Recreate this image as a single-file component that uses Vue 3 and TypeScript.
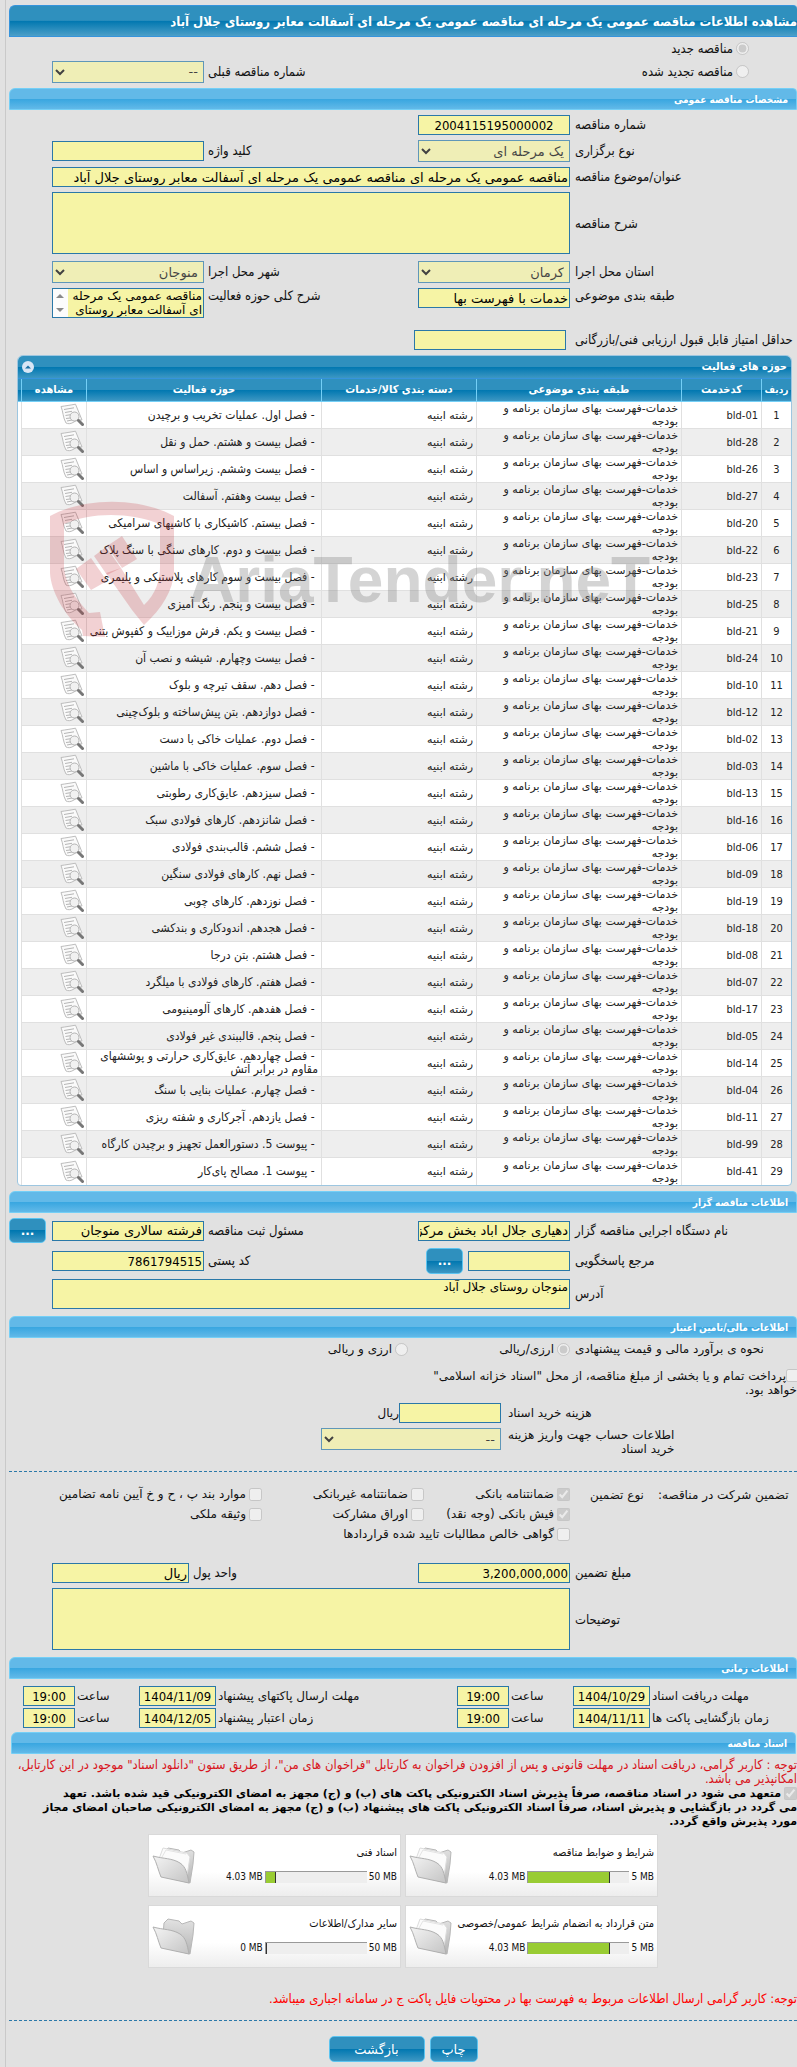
<script setup lang="ts">
interface Activity {
  code: string
  area: string
}

interface DocCard {
  title: string
  used: string
  limit: string
  percent: number
  filled: boolean
}

const activities: Activity[] = [
  { code: 'bld-01', area: 'فصل اول. عملیات تخریب و برچیدن' },
  { code: 'bld-28', area: 'فصل بیست و هشتم. حمل و نقل' },
  { code: 'bld-26', area: 'فصل بیست وششم. زیراساس و اساس' },
  { code: 'bld-27', area: 'فصل بیست وهفتم. آسفالت' },
  { code: 'bld-20', area: 'فصل بیستم. کاشیکاری با کاشیهای سرامیکی' },
  { code: 'bld-22', area: 'فصل بیست و دوم. کارهای سنگی با سنگ پلاک' },
  { code: 'bld-23', area: 'فصل بیست و سوم کارهای پلاستیکی و پلیمری' },
  { code: 'bld-25', area: 'فصل بیست و پنجم. رنگ آمیزی' },
  { code: 'bld-21', area: 'فصل بیست و یکم. فرش موزاییک و کفپوش بتنی' },
  { code: 'bld-24', area: 'فصل بیست وچهارم. شیشه و نصب آن' },
  { code: 'bld-10', area: 'فصل دهم. سقف تیرچه و بلوک' },
  { code: 'bld-12', area: 'فصل دوازدهم. بتن پیش‌ساخته و بلوک‌چینی' },
  { code: 'bld-02', area: 'فصل دوم. عملیات خاکی با دست' },
  { code: 'bld-03', area: 'فصل سوم. عملیات خاکی با ماشین' },
  { code: 'bld-13', area: 'فصل سیزدهم. عایق‌کاری رطوبتی' },
  { code: 'bld-16', area: 'فصل شانزدهم. کارهای فولادی سبک' },
  { code: 'bld-06', area: 'فصل ششم. قالب‌بندی فولادی' },
  { code: 'bld-09', area: 'فصل نهم. کارهای فولادی سنگین' },
  { code: 'bld-19', area: 'فصل نوزدهم. کارهای چوبی' },
  { code: 'bld-18', area: 'فصل هجدهم. اندودکاری و بندکشی' },
  { code: 'bld-08', area: 'فصل هشتم. بتن درجا' },
  { code: 'bld-07', area: 'فصل هفتم. کارهای فولادی با میلگرد' },
  { code: 'bld-17', area: 'فصل هفدهم. کارهای آلومینیومی' },
  { code: 'bld-05', area: 'فصل پنجم. قالببندی غیر فولادی' },
  { code: 'bld-14', area: 'فصل چهاردهم. عایق‌کاری حرارتی و پوششهای مقاوم در برابر آتش' },
  { code: 'bld-04', area: 'فصل چهارم. عملیات بنایی با سنگ' },
  { code: 'bld-11', area: 'فصل یازدهم. آجرکاری و شفته ریزی' },
  { code: 'bld-99', area: 'پیوست 5. دستورالعمل تجهیز و برچیدن کارگاه' },
  { code: 'bld-41', area: 'پیوست 1. مصالح پای‌کار' },
]

const documents: DocCard[] = [
  { title: 'شرایط و ضوابط مناقصه', used: '4.03 MB', limit: '5 MB', percent: 81, filled: true },
  { title: 'اسناد فنی', used: '4.03 MB', limit: '50 MB', percent: 10, filled: true },
  { title: 'متن قرارداد به انضمام شرایط عمومی/خصوصی', used: '4.03 MB', limit: '5 MB', percent: 81, filled: true },
  { title: 'سایر مدارک/اطلاعات', used: '0 MB', limit: '50 MB', percent: 1, filled: false },
]

const subject = 'مناقصه عمومی یک مرحله ای مناقصه عمومی یک مرحله ای آسفالت معابر روستای جلال آباد'
</script>

<template>
  <main class="page" dir="rtl" lang="fa">
    <h1 class="title">مشاهده اطلاعات {{ subject }}</h1>

    <div class="form origin">
      <label class="option kind"><input type="radio" name="kind" checked disabled />مناقصه جدید</label>
      <label class="option kind"><input type="radio" name="kind" disabled />مناقصه تجدید شده</label>
      <label class="c3" for="prev">شماره مناقصه قبلی</label>
      <select id="prev" class="c4" disabled><option>--</option></select>
    </div>

    <h2 class="bar">مشخصات مناقصه عمومی</h2>
    <div class="form spec">
      <label class="c1" for="num">شماره مناقصه</label>
      <input id="num" class="c2 num mid" value="2004115195000002" readonly />

      <label class="c1" for="mode">نوع برگزاری</label>
      <select id="mode" class="c2" disabled><option>یک مرحله ای</option></select>
      <label class="c3" for="keyword">کلید واژه</label>
      <input id="keyword" class="c4" readonly />

      <label class="c1" for="subject">عنوان/موضوع مناقصه</label>
      <input id="subject" class="wide" :value="subject" readonly />

      <label class="c1" for="desc">شرح مناقصه</label>
      <textarea id="desc" class="wide tall" readonly></textarea>

      <label class="c1" for="province">استان محل اجرا</label>
      <select id="province" class="c2" disabled><option>کرمان</option></select>
      <label class="c3" for="city">شهر محل اجرا</label>
      <select id="city" class="c4" disabled><option>منوجان</option></select>

      <label class="c1 top" for="category">طبقه بندی موضوعی</label>
      <input id="category" class="c2 top" value="خدمات با فهرست بها" readonly />
      <label class="c3 top" for="scope">شرح کلی حوزه فعالیت</label>
      <textarea id="scope" class="c4 short scroll" readonly>مناقصه عمومی یک مرحله ای آسفالت معابر روستای</textarea>
    </div>
    <div class="form score">
      <label class="c1" for="score">حداقل امتیاز قابل قبول ارزیابی فنی/بازرگانی</label>
      <input id="score" class="c2" readonly />
    </div>

    <section class="panel">
      <header class="panel-head">
        <h2>حوزه های فعالیت</h2>
        <button type="button" class="collapse" aria-label="بستن">
          <svg viewBox="0 0 12 12" width="12" height="12"><circle cx="6" cy="6" r="6" fill="#d9e6f5" /><path d="M3 7.5 6 4.500l3 3z" fill="#1b6fa3" /></svg>
        </button>
      </header>
      <table>
        <colgroup>
          <col class="w-row" /><col class="w-code" /><col class="w-cat" /><col class="w-group" /><col /><col class="w-view" /><col class="w-gutter" />
        </colgroup>
        <thead>
          <tr>
            <th class="tight">ردیف</th>
            <th>کدخدمت</th>
            <th>طبقه بندی موضوعی</th>
            <th>دسته بندی کالا/خدمات</th>
            <th>حوزه فعالیت</th>
            <th>مشاهده</th>
            <td></td>
          </tr>
        </thead>
        <tbody>
          <tr v-for="(item, i) in activities" :key="item.code">
            <td class="index">{{ i + 1 }}</td>
            <td class="code"><bdi>{{ item.code }}</bdi></td>
            <td>خدمات-فهرست بهای سازمان برنامه و بودجه</td>
            <td>رشته ابنیه</td>
            <td class="area">&nbsp;- {{ item.area }}</td>
            <td class="view">
              <button type="button" aria-label="مشاهده">
                <svg viewBox="0 0 24 24" width="24" height="24" fill="none">
                  <path d="M1 3.500C5 3 11 2 15.500 1.200L22 17c-3-.5-6 .5-9 2.500-2.500 1.500-5 1.500-7 .5C3 15 3 8 1 3.500z" fill="#fafafa" stroke="#bdbdbd" />
                  <path d="M4 6.500l10-1.700M5 9.500l7-1.200M5.500 12.500l5-.8M6 15.500l5-.6M7 18l5-1" stroke="#b5b5b5" />
                  <circle cx="14.500" cy="13.500" r="4.500" fill="#eee" fill-opacity=".85" stroke="#b4b4b4" />
                  <path d="M18.500 17.500l4 4" stroke="#777" stroke-width="3" stroke-linecap="round" />
                </svg>
              </button>
            </td>
            <td></td>
          </tr>
        </tbody>
      </table>
      <svg class="watermark" viewBox="0 0 620 150" aria-hidden="true">
        <g fill="#c1272d" fill-opacity=".21">
          <path d="M0 16C35-3 89-3 124 16V72C123 90 112 109 94 125L82 110 56 73 71 68 94 105C106 94 110 80 110 67V24C79 12 42 12 14 24V68C16 85 25 98 39 113L50 112 55 137 33 136 32 130C14 115 1 91 0 73z" />
          <path d="M26 69 41 58 57 81 41 90zM44 56 56 47 71 68 57 75zM57 46 72 36 87 59 72 68z" />
        </g>
        <text x="139" y="102" fill="#808080" fill-opacity=".34">AriaTender.neT</text>
      </svg>
    </section>

    <h2 class="bar">اطلاعات مناقصه گزار</h2>
    <div class="form agency">
      <label class="c1" for="agency">نام دستگاه اجرایی مناقصه گزار</label>
      <input id="agency" class="c2" value="دهیاری جلال اباد بخش مرکزی" readonly />
      <label class="c3" for="registrar">مسئول ثبت مناقصه</label>
      <input id="registrar" class="c4" value="فرشته سالاری منوجان" readonly />
      <button type="button" class="btn more c5">...</button>

      <label class="c1" for="contact">مرجع پاسخگویی</label>
      <div class="c2 pick">
        <input id="contact" readonly />
        <button type="button" class="btn more">...</button>
      </div>
      <label class="c3" for="zip">کد پستی</label>
      <input id="zip" class="c4 num" value="7861794515" readonly />

      <label class="c1" for="address">آدرس</label>
      <textarea id="address" class="wide short" readonly>منوجان روستای جلال آباد</textarea>
    </div>

    <h2 class="bar">اطلاعات مالی/تامین اعتبار</h2>
    <div class="estimate">
      <span class="cap">نحوه ی برآورد مالی و قیمت پیشنهادی</span>
      <label class="option"><input type="radio" name="currency" checked disabled />ارزی/ریالی</label>
      <label class="option"><input type="radio" name="currency" disabled />ارزی و ریالی</label>
    </div>
    <label class="treasury"><input type="checkbox" disabled />پرداخت تمام و یا بخشی از مبلغ مناقصه، از محل "اسناد خزانه اسلامی"<br />خواهد بود.</label>
    <div class="cost">
      <label for="cost">هزینه خرید اسناد</label>
      <div class="with-unit"><input id="cost" readonly /><span>ریال</span></div>
      <label for="account">اطلاعات حساب جهت واریز هزینه<br />خرید اسناد</label>
      <select id="account" disabled><option>--</option></select>
    </div>

    <hr />

    <div class="deposit">
      <span>تضمین شرکت در مناقصه:</span>
      <span>نوع تضمین</span>
      <div class="kinds">
        <label class="option"><input type="checkbox" checked disabled />ضمانتنامه بانکی</label>
        <label class="option"><input type="checkbox" disabled />ضمانتنامه غیربانکی</label>
        <label class="option"><input type="checkbox" disabled />موارد بند پ ، ح و خ آیین نامه تضامین</label>
        <label class="option"><input type="checkbox" checked disabled />فیش بانکی (وجه نقد)</label>
        <label class="option"><input type="checkbox" disabled />اوراق مشارکت</label>
        <label class="option"><input type="checkbox" disabled />وثیقه ملکی</label>
        <label class="option all"><input type="checkbox" disabled />گواهی خالص مطالبات تایید شده قراردادها</label>
      </div>
    </div>
    <div class="form amount">
      <label class="c1" for="amount">مبلغ تضمین</label>
      <input id="amount" class="c2 num" value="3,200,000,000" readonly />
      <div class="unit">
        <label for="unit">واحد پول</label>
        <input id="unit" value="ریال" readonly />
      </div>
      <label class="c1" for="notes">توضیحات</label>
      <textarea id="notes" class="wide tall" readonly></textarea>
    </div>

    <h2 class="bar">اطلاعات زمانی</h2>
    <div class="dates">
      <label for="d1">مهلت دریافت اسناد</label><input id="d1" class="num" value="1404/10/29" readonly />
      <label for="t1">ساعت</label><input id="t1" class="num" value="19:00" readonly />
      <label for="d2">مهلت ارسال پاکتهای پیشنهاد</label><input id="d2" class="num" value="1404/11/09" readonly />
      <label for="t2">ساعت</label><input id="t2" class="num" value="19:00" readonly /><i></i>
      <label for="d3">زمان بازگشایی پاکت ها</label><input id="d3" class="num" value="1404/11/11" readonly />
      <label for="t3">ساعت</label><input id="t3" class="num" value="19:00" readonly />
      <label for="d4">زمان اعتبار پیشنهاد</label><input id="d4" class="num" value="1404/12/05" readonly />
      <label for="t4">ساعت</label><input id="t4" class="num" value="19:00" readonly />
    </div>

    <h2 class="bar docs">اسناد مناقصه</h2>
    <p class="notice">توجه : کاربر گرامی، دریافت اسناد در مهلت قانونی و پس از افزودن فراخوان به کارتابل "فراخوان های من"، از طریق ستون "دانلود اسناد" موجود در این کارتابل،<br />امکانپذیر می باشد.</p>
    <label class="pledge"><input type="checkbox" checked disabled />متعهد می شود در اسناد مناقصه، صرفاً پذیرش اسناد الکترونیکی پاکت های (ب) و (ج) مجهز به امضای الکترونیکی قید شده باشد. تعهد<br />می گردد در بازگشایی و پذیرش اسناد، صرفاً اسناد الکترونیکی پاکت های پیشنهاد (ب) و (ج) مجهز به امضای الکترونیکی صاحبان امضای مجاز<br />مورد پذیرش واقع گردد.</label>

    <div class="cards">
      <article v-for="doc in documents" :key="doc.title" class="card">
        <div class="info">
          <h3>{{ doc.title }}</h3>
          <div class="usage" dir="ltr">
            <span>{{ doc.used }}</span>
            <div class="track"><div class="fill" :style="{ width: doc.percent + '%' }"></div></div>
            <span>{{ doc.limit }}</span>
          </div>
        </div>
        <svg class="folder" viewBox="0 0 44 40" width="44" height="40" stroke-linejoin="round">
          <defs>
            <linearGradient id="front" x1="0" y1="0" x2="1" y2="1"><stop offset="0" stop-color="#f4f4f4" /><stop offset="1" stop-color="#c4c4c4" /></linearGradient>
            <linearGradient id="back" x1="0" y1="0" x2="0" y2="1"><stop offset="0" stop-color="#e2e2e2" /><stop offset="1" stop-color="#b4b4b4" /></linearGradient>
          </defs>
          <path d="M12 6 16 2 27 4 30 7 39 4 42 6 41 18 38 37 10 30z" fill="url(#back)" stroke="#b8b8b8" />
          <path v-if="doc.filled" d="M7 13 11 2 35 7 38 11 35 30 10 26z" fill="#fbfbfb" stroke="#dcdcdc" />
          <path v-if="doc.filled" d="M10 11 14 4 34 8" fill="none" stroke="#e4e4e4" />
          <path d="M1 10C12 13 20 12 28 17 34 21 35 27 37 37L9 31C6 24 5 17 1 10z" fill="url(#front)" stroke="#b0b0b0" />
        </svg>
      </article>
    </div>

    <p class="notice final">توجه: کاربر گرامی ارسال اطلاعات مربوط به فهرست بها در محتویات فایل پاکت ج در سامانه اجباری میباشد.</p>
    <hr />
    <footer class="actions">
      <button type="button" class="btn print">چاپ</button>
      <button type="button" class="btn back">بازگشت</button>
    </footer>
  </main>
</template>

<style>
body {
  background: #e1e1e1;
}
</style>

<style scoped>
* {
  box-sizing: border-box;
}
.page {
  --narrow: 'DejaVu Sans Condensed', 'DejaVu Sans', sans-serif;
  --regular: 'DejaVu Sans', sans-serif;
  margin-left: 5px;
  padding: 5px 0 5px 3px;
  border-left: 1px solid #c9c9c9;
  font: 13px/16px var(--narrow);
  color: #111;
  overflow: hidden;
}
h1, h2, h3, p {
  margin: 0;
}
input, select, textarea, button {
  font-family: inherit;
}
.title {
  height: 32px;
  border: 1px solid #3694dc;
  border-right: 0;
  border-radius: 6px 4px 0 0;
  background: linear-gradient(#2f90be 0, #2f90be 48%, #0077b0 50%, #4c9fc8 100%);
  color: #fff;
  font-size: 13px;
  line-height: 32px;
  white-space: nowrap;
}
.bar {
  height: 22px;
  padding-right: 8px;
  border: 1px solid #74cff6;
  border-radius: 6px 4px 0 0;
  background: linear-gradient(#62b9e8 0, #62b9e8 48%, #38a6e0 50%, #62b9e8 100%);
  color: #fff;
  font-size: 10px;
  line-height: 22px;
}
.docs {
  margin: 0 1px 0 2px;
}

.form {
  display: grid;
  grid-template-columns: minmax(0, 227fr) 152px minmax(0, 214fr) 152px minmax(0, 43fr);
  gap: 5px 0;
  align-items: center;
  padding: 5px 0 7px;
}
.c1 { grid-column: 1; padding-left: 5px; text-align: left; }
.c2 { grid-column: 2; }
.c3 { grid-column: 3; padding-left: 4px; text-align: left; }
.c4 { grid-column: 4; }
.c5 { grid-column: 5; justify-self: end; }
.wide { grid-column: 2 / 5; }
.top { align-self: start; }

input:not([type]), textarea, select {
  display: block;
  width: 100%;
  height: 20px;
  margin: 0;
  padding: 0 1px;
  border: 1px solid #2a78a8;
  border-radius: 0;
  outline: 0;
  background: #f6f4a5;
  color: #000;
  font-family: var(--regular);
  font-size: 13px;
}
input.num:not([type]) {
  font-family: var(--narrow);
}
select {
  height: 22px;
  opacity: 0.7;
}
textarea {
  font-size: 12px;
  line-height: 14px;
  resize: none;
  overflow: hidden;
}
.spec .scroll {
  padding-left: 16px;
  background:
    url("data:image/svg+xml,%3Csvg xmlns='http://www.w3.org/2000/svg' width='15' height='28'%3E%3Cpath d='M0 0h15v28H0z' fill='%23fcfcfc'/%3E%3Cpath d='M3 9l4-4 4 4zM3 19h8l-4 4z' fill='%238a8a8a'/%3E%3C/svg%3E") left top no-repeat,
    #f6f4a5;
}
.tall { height: 62px; margin-bottom: 2px; }
.short { height: 30px; }
.mid { text-align: center; }

.option {
  display: flex;
  align-items: center;
  gap: 3px;
  white-space: nowrap;
}
.option input, .treasury input, .pledge input {
  flex: none;
  width: 13px;
  height: 13px;
  margin: 0;
}
.origin {
  padding: 0 0 5px;
  gap: 0;
}
.kind {
  grid-column: 1;
  height: 23px;
  padding-right: 48px;
}
.origin .c3, .origin .c4 {
  grid-row: 2;
}
.spec {
  padding-bottom: 12px;
}
.score {
  grid-template-columns: minmax(0, 231fr) 152px minmax(0, 405fr);
  padding: 0 0 5px;
}
.score .c1 { padding-left: 9px; white-space: nowrap; }

.panel {
  position: relative;
  margin: 0 5px 5px 8px;
  border: 1px solid #9dc6e0;
  border-radius: 6px 6px 4px 4px;
  background: #fff;
}
.panel-head {
  display: flex;
  align-items: center;
  justify-content: space-between;
  height: 23px;
  padding: 0 4px;
  border-radius: 5px 5px 0 0;
  border-bottom: 1px solid #3694dc;
  background: linear-gradient(#2f90be 0, #2f90be 48%, #0077b0 50%, #3d97c3 100%);
  color: #fff;
}
.panel-head h2 {
  font-size: 11px;
}
.collapse, .view button {
  display: block;
  padding: 0;
  border: 0;
  background: none;
  cursor: pointer;
}
.collapse svg, .view svg {
  display: block;
}
table {
  width: 100%;
  table-layout: fixed;
  border-collapse: separate;
  border-spacing: 0;
}
.w-row { width: 30px; }
.w-code { width: 80px; }
.w-cat { width: 205px; }
.w-group { width: 155px; }
.w-view { width: 65px; }
.w-gutter { width: 3px; }
thead th, thead td {
  height: 23px;
  padding: 0;
  border-left: 1px solid #74cff6;
  border-bottom: 1px solid #74cff6;
  background: linear-gradient(#2f90be 0, #2f90be 48%, #0077b0 50%, #3d97c3 100%);
  color: #fff;
  font-size: 11px;
}
thead .tight {
  font-size: 10px;
}
thead td:last-child, tbody td:last-child {
  border-left: 0;
}
tbody td {
  height: 27px;
  padding: 0 3px;
  border-left: 1px solid #e0e0e0;
  border-bottom: 1px solid #e0e0e0;
  font-family: var(--regular);
  font-size: 11px;
  line-height: 13px;
  color: #222;
}
tbody tr:nth-child(even) td:not(:last-child) {
  background: #eee;
}
tbody td:last-child {
  padding: 0;
  border-bottom: 0;
}
tbody .index, tbody .code, tbody .area {
  font-family: var(--narrow);
}
tbody .index {
  padding: 0;
  text-align: center;
}
tbody .area {
  padding-left: 0;
  font-size: 12px;
  word-break: keep-all;
}
tbody tr:last-child td {
  border-bottom: 0;
}
tbody .view {
  padding: 0 2px;
}
.watermark {
  position: absolute;
  left: 32px;
  top: 144px;
  width: 620px;
  height: 150px;
  pointer-events: none;
  direction: ltr;
}
.watermark text {
  font: bold 64px 'Liberation Sans', sans-serif;
}

.agency .btn { height: 26px; }
.agency .c5 { height: 25px; }
.btn {
  border: 1px solid #5cc4f0;
  border-radius: 5px;
  background: linear-gradient(#2f90be 0, #2f90be 48%, #0077b0 50%, #3d97c3 100%);
  color: #fff;
  font-family: var(--regular);
  font-size: 13px;
  cursor: pointer;
}
.more {
  width: 37px;
  padding: 0;
  font-size: 12px;
  font-weight: bold;
}
.pick {
  display: flex;
  align-items: center;
  gap: 5px;
}
.pick input:not([type]) { width: 102px; }

.estimate, .treasury, .cost, .deposit, .dates {
  font-family: var(--regular);
  font-size: 12px;
  line-height: 14px;
}
.estimate {
  display: grid;
  grid-template-columns: minmax(0, 227fr) 162px minmax(0, 399fr);
  padding: 4px 0 13px;
}
.estimate .cap {
  padding-left: 5px;
  text-align: left;
}
.treasury {
  display: block;
}
.treasury input, .pledge input {
  vertical-align: top;
}
.treasury input {
  margin-right: -2px;
}
.cost {
  display: grid;
  grid-template-columns: minmax(0, 296fr) 180px minmax(0, 312fr);
  gap: 5px 0;
  align-items: center;
  padding: 6px 0 15px;
}
.cost > label {
  grid-column: 1;
  justify-self: end;
  padding-left: 7px;
}
.cost > :not(label) { grid-column: 2; }
.cost select { align-self: start; }
.with-unit { display: flex; align-items: center; }
.with-unit input:not([type]) { width: 102px; }

hr {
  margin: 0;
  border: 0;
  border-top: 1px dashed #2a78a8;
}
.deposit {
  display: grid;
  grid-template-columns: minmax(0, 142fr) 85px minmax(0, 561fr);
  padding: 15px 0 11px;
}
.deposit > span {
  padding-left: 3px;
  text-align: left;
  line-height: 16px;
  white-space: nowrap;
}
.deposit > span:nth-child(2) { padding-left: 20px; }
.kinds {
  display: grid;
  grid-template-columns: 146px 162px minmax(0, 1fr);
  grid-auto-rows: 20px;
  align-items: start;
}
.kinds .all { grid-column: 1 / 4; }
.amount { padding-bottom: 5px; }
.unit {
  grid-column: 3 / 5;
  display: flex;
  justify-content: flex-end;
  align-items: center;
  gap: 4px;
}
.unit input:not([type]) { width: 137px; }

.dates {
  display: grid;
  grid-template-columns: minmax(0, 147fr) 77px 64px 52px minmax(0, 241fr) 77px 64px 52px minmax(0, 14fr);
  gap: 2px 0;
  align-items: center;
  padding: 7px 0 4px;
}
.dates label {
  padding-left: 2px;
  text-align: left;
}
.dates input:not([type]) {
  padding: 0;
  text-align: center;
}

.notice {
  padding: 4px 0 1px;
  color: #d8141c;
  line-height: 14px;
  white-space: nowrap;
}
.pledge {
  display: block;
  font-family: var(--regular);
  font-size: 11px;
  font-weight: bold;
  line-height: 14px;
  color: #000;
  white-space: nowrap;
}
.pledge input { margin: 0 0 0 3px; }
.cards {
  display: grid;
  grid-template-columns: 253px 253px;
  justify-content: center;
  gap: 8px 4px;
  padding: 5px 0 24px;
}
.card {
  display: flex;
  justify-content: space-between;
  height: 63px;
  padding: 11px 3px 0;
  border: 1px solid #d9d9d9;
  background: linear-gradient(#fff 60%, #ededed);
}
.info {
  flex: 1;
}
.card h3 {
  font-size: 11px;
  font-weight: normal;
  line-height: 14px;
  white-space: nowrap;
}
.usage {
  display: flex;
  justify-content: flex-end;
  align-items: center;
  gap: 2px;
  margin-top: 11px;
  font-size: 10px;
  line-height: 12px;
}
.track {
  width: 102px;
  height: 12px;
  border-top: 1px solid #999;
  border-left: 1px solid #999;
  background: #eee;
}
.fill {
  height: 100%;
  border-right: 1px solid #333;
  background: #9c3;
}
.folder {
  flex: none;
}
.notice.final {
  padding: 0 0 14px;
  color: #f00;
}
.actions {
  display: flex;
  justify-content: center;
  gap: 5px;
  padding-top: 15px;
}
.actions .btn {
  height: 26px;
  padding: 0;
}
.print { width: 48px; }
.back { width: 96px; }
</style>
